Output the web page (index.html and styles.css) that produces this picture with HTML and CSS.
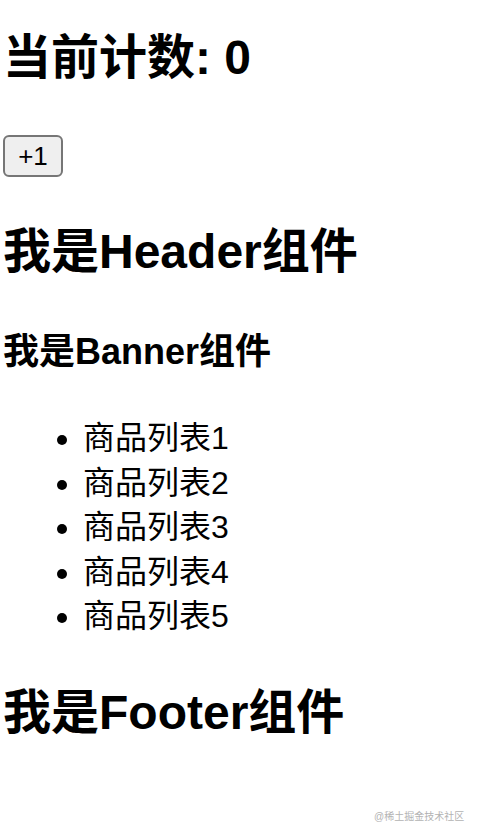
FILE: index.html
```html
<!DOCTYPE html>
<html lang="zh">
<head>
<meta charset="utf-8">
<title>Counter</title>
<link rel="stylesheet" href="styles.css">
</head>
<body>
<div class="app">
  <h1 class="title count-title">当前计数: 0</h1>
  <div class="actions"><button class="btn">+1</button></div>
  <h1 class="title header-title">我是Header组件</h1>
  <h2 class="banner-title">我是Banner组件</h2>
  <ul class="list">
    <li>商品列表1</li>
    <li>商品列表2</li>
    <li>商品列表3</li>
    <li>商品列表4</li>
    <li>商品列表5</li>
  </ul>
  <h1 class="title footer-title">我是Footer组件</h1>
</div>
<div class="watermark">@稀土掘金技术社区</div>
</body>
</html>
```

FILE: styles.css
```css
html, body {
  margin: 0;
  padding: 0;
  background: #ffffff;
}
body {
  font-family: "Liberation Sans", "Noto Sans CJK SC", sans-serif;
  color: #000000;
  width: 480px;
  height: 838px;
  position: relative;
  overflow: hidden;
}
.app {
  padding-left: 3px;
  display: flex;
  flex-direction: column;
  align-items: flex-start;
}
.title {
  font-size: 48px;
  line-height: 67px;
  font-weight: bold;
  margin: 0;
}
.count-title {
  margin-top: 24px;
}
.actions {
  margin-top: 44px;
  display: flex;
}
.btn {
  width: 60px;
  height: 42px;
  box-sizing: border-box;
  border: 2px solid #767676;
  border-radius: 6px;
  background: #efefef;
  font-family: "Liberation Sans", sans-serif;
  font-size: 26px;
  color: #000;
  padding: 0;
  line-height: 38px;
}
.header-title {
  margin-top: 41px;
}
.banner-title {
  font-size: 36px;
  line-height: 50px;
  font-weight: bold;
  margin: 42px 0 0 0;
}
.list {
  margin: 39px 0 0 0;
  padding-left: 80px;
  font-size: 32px;
  line-height: 44.5px;
}
.list li {
  padding-left: 0;
}
.footer-title {
  margin-top: 40px;
}
.watermark {
  position: absolute;
  left: 374px;
  top: 810px;
  font-size: 10px;
  line-height: 14px;
  color: #b3b3b3;
  font-family: "Liberation Sans", "Noto Sans CJK SC", sans-serif;
  white-space: nowrap;
}
```
